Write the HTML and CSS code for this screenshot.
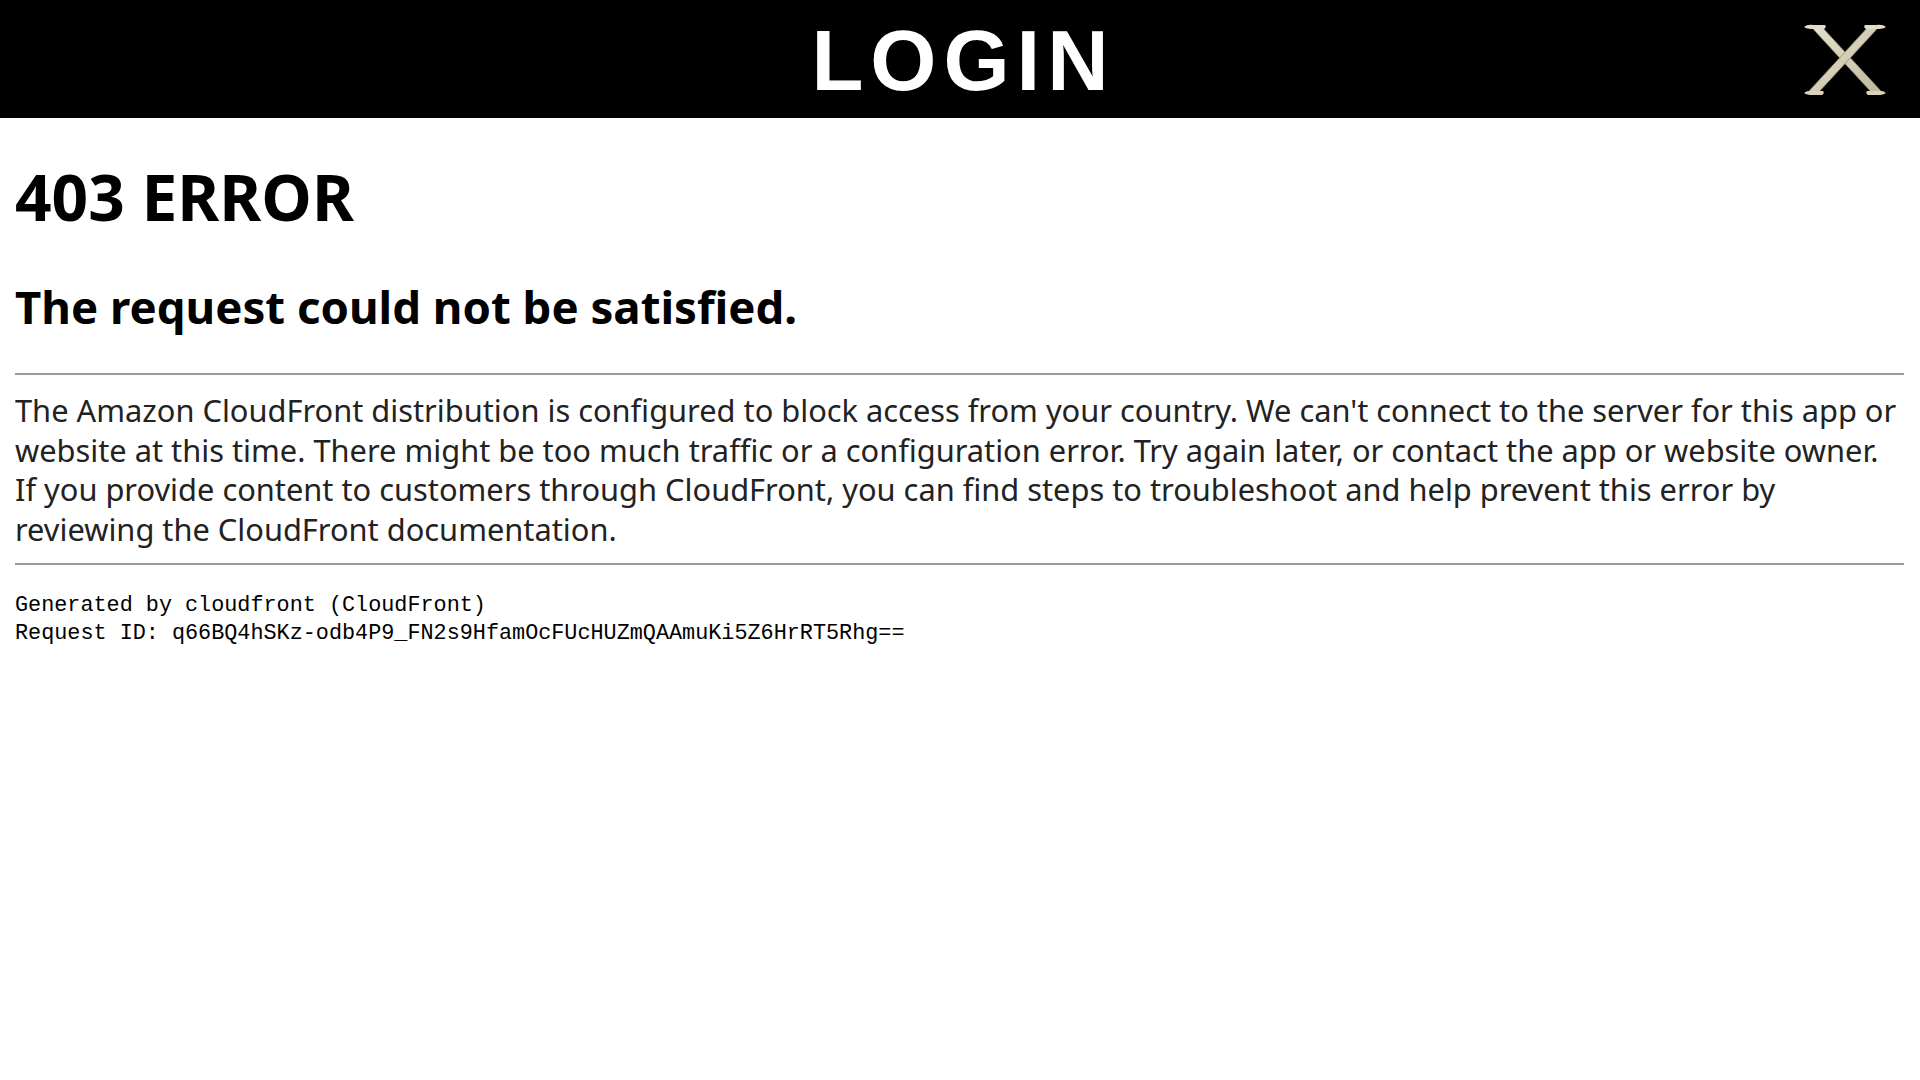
FILE: index.html
```html
<!DOCTYPE html>
<html lang="en">
<head>
    <meta charset="UTF-8">
    <meta name="viewport" content="width=device-width, initial-scale=1.0">
    <title>Login</title>
    <link rel="stylesheet" href="styles.css">
</head>
<body>
    <header class="topbar">
        <h1 class="topbar-title">LOGIN</h1>
        <button class="close-btn" aria-label="Close">
            <svg width="84" height="74" viewBox="0 0 84 74">
                <defs>
                    <linearGradient id="bone" x1="0" y1="0" x2="1" y2="1">
                        <stop offset="0" stop-color="#e6e1cc"/>
                        <stop offset="0.5" stop-color="#d4ceb5"/>
                        <stop offset="1" stop-color="#bdb79d"/>
                    </linearGradient>
                </defs>
                <!-- two strokes of the X -->
                <path d="M9 3 L18 3 L77 67 L79 71 L70 71 L11 7 Z" fill="url(#bone)" stroke="#8f8a73" stroke-width="0.8"/>
                <path d="M75 3 L66 3 L7 67 L5 71 L14 71 L73 7 Z" fill="url(#bone)" stroke="#8f8a73" stroke-width="0.8"/>
                <!-- flared ends -->
                <path d="M1 4 Q4 1 11 2 L22 2 Q24 4 21 6 L10 6 Q4 6 1 4 Z" fill="#e3ddc7"/>
                <path d="M83 4 Q80 1 73 2 L62 2 Q60 4 63 6 L74 6 Q80 6 83 4 Z" fill="#e3ddc7"/>
                <path d="M1 70 Q4 67 11 68 L20 68 Q22 70 19 72 L10 72 Q4 72 1 70 Z" fill="#d9d3bb"/>
                <path d="M83 70 Q80 67 73 68 L64 68 Q62 70 65 72 L74 72 Q80 72 83 70 Z" fill="#d9d3bb"/>
            </svg>
        </button>
    </header>

    <main class="error-page">
        <h1 class="error-code">403 ERROR</h1>
        <h2 class="error-title">The request could not be satisfied.</h2>
        <hr class="rule">
        <p class="error-text">The Amazon CloudFront distribution is configured to block access from your country. We can't connect to the server for this app or website at this time. There might be too much traffic or a configuration error. Try again later, or contact the app or website owner. If you provide content to customers through CloudFront, you can find steps to troubleshoot and help prevent this error by reviewing the CloudFront documentation.</p>
        <hr class="rule">
        <pre class="error-meta">Generated by cloudfront (CloudFront)
Request ID: q66BQ4hSKz-odb4P9_FN2s9HfamOcFUcHUZmQAAmuKi5Z6HrRT5Rhg==</pre>
    </main>
</body>
</html>
```

FILE: styles.css
```css
body {
    margin: 0;
    background-color: #fff;
    font-family: "Noto Sans", "Open Sans", sans-serif;
    color: #000;
}

/* top bar */
.topbar {
    height: 118px;
    background-color: #000;
    display: flex;
    align-items: center;
    justify-content: center;
    position: relative;
}
.topbar-title {
    margin: 0;
    color: #fff;
    font-family: "Liberation Sans", Arial, sans-serif;
    font-weight: bold;
    font-size: 85px;
    letter-spacing: 7px;
    line-height: 1;
    padding-left: 7px;
    padding-top: 2px;
}
.close-btn {
    position: absolute;
    top: 23px;
    right: 33px;
    background: none;
    border: none;
    padding: 0;
    cursor: pointer;
}
.close-btn svg {
    display: block;
}

/* error content */
.error-page {
    padding: 39px 16px 0 15px;
}
.error-code {
    margin: 0;
    font-size: 64px;
    line-height: 80px;
    font-weight: bold;
}
.error-title {
    margin: 39px 0 0;
    font-size: 45.6px;
    line-height: 60px;
    font-weight: bold;
}
.rule {
    margin: 37px 0 0;
    border: none;
    border-top: 2px solid #9a9a9a;
    height: 0;
}
.error-text {
    margin: 16px 0 14px;
    font-size: 30.8px;
    line-height: 39.5px;
    color: #222;
}
.error-text + .rule {
    margin-top: 0;
}
.error-meta {
    margin: 27px 0 0;
    font-family: "Liberation Mono", "DejaVu Sans Mono", monospace;
    font-size: 21.8px;
    line-height: 28px;
    color: #000;
}
```
